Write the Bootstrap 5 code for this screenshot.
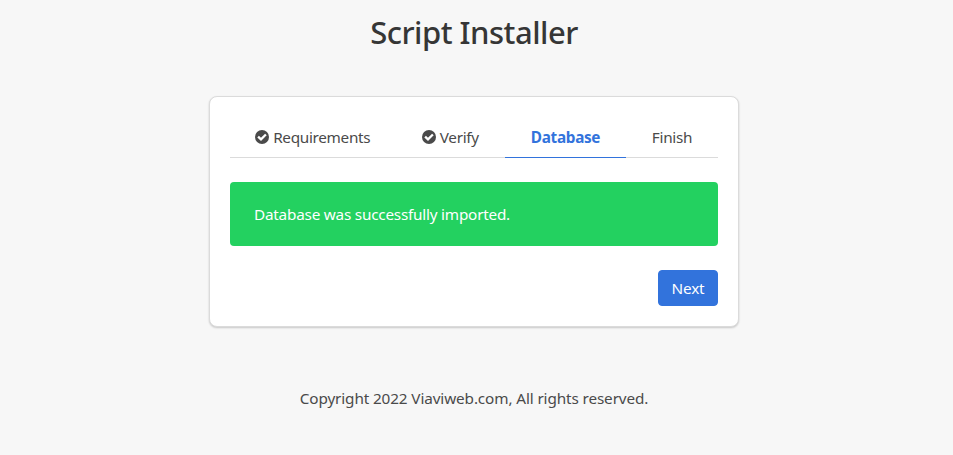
<!DOCTYPE html>
<html lang="en">
<head>
<meta charset="utf-8">
<meta name="viewport" content="width=device-width, initial-scale=1">
<title>Script Installer</title>
<link href="https://cdn.jsdelivr.net/npm/bootstrap@5.3.0/dist/css/bootstrap.min.css" rel="stylesheet">
<style>
body{background:#f7f7f7;color:#4a4a4a;font-family:"Segoe UI","Noto Sans","Open Sans",sans-serif;font-size:15.3px;line-height:24px;letter-spacing:-.22px;overflow:hidden}
.installer{width:530px;margin-left:209px}
.page-title{color:#363636;font-size:31px;line-height:36px;font-weight:500;letter-spacing:-.5px;padding-top:14px;margin-bottom:46px}
.panel{border:1px solid #dbdbdb;border-radius:8px;box-shadow:0 1px 2px rgba(10,10,10,.2);padding:20px;height:231px}
.steps{display:grid;grid-template-columns:165.5px 109.5px 121px 92px;height:41px;letter-spacing:-.3px}
.steps .nav-link{color:#4a4a4a;border-bottom:1px solid #dbdbdb;border-radius:0;padding:8px 0;gap:4px}
.steps .nav-link.active{color:#3273dc;border-color:#3273dc;font-weight:700}
.steps svg{width:14px;height:14px}
.notice{background:#23d160;color:#fff;border:0;border-radius:4px;height:64px;padding:20px 24px}
.btn-next{background:#3273dc;border-color:#3273dc;color:#fff;width:60px;height:36px;padding:0;border-radius:4px;font-size:15.3px;letter-spacing:-.2px}
.btn-next:hover{background:#276cda;color:#fff}
footer{margin-top:59px;letter-spacing:-.12px}
</style>
</head>
<body>
<main class="installer">
  <h1 class="page-title text-center"><span>Script Installer</span></h1>
  <section class="panel bg-white">
    <nav class="nav steps">
      <a class="nav-link d-flex align-items-center justify-content-center" href="#"><svg viewBox="0 0 14 14" aria-hidden="true"><circle cx="7" cy="7" r="7" fill="#4a4a4a"/><path d="m3.1 6.6 2.9 2.8 4.9-4.9" fill="none" stroke="#fff" stroke-width="2.3"/></svg><span>Requirements</span></a>
      <a class="nav-link d-flex align-items-center justify-content-center" href="#"><svg viewBox="0 0 14 14" aria-hidden="true"><circle cx="7" cy="7" r="7" fill="#4a4a4a"/><path d="m3.1 6.6 2.9 2.8 4.9-4.9" fill="none" stroke="#fff" stroke-width="2.3"/></svg><span>Verify</span></a>
      <a class="nav-link active d-flex align-items-center justify-content-center" href="#"><span>Database</span></a>
      <a class="nav-link d-flex align-items-center justify-content-center" href="#"><span>Finish</span></a>
    </nav>
    <div class="alert notice mt-4 mb-4" role="alert"><span>Database was successfully imported.</span></div>
    <div class="d-flex justify-content-end"><button class="btn btn-next" type="button">Next</button></div>
  </section>
  <footer class="text-center"><span>Copyright 2022 Viaviweb.com, All rights reserved.</span></footer>
</main>
<script src="https://cdn.jsdelivr.net/npm/bootstrap@5.3.0/dist/js/bootstrap.bundle.min.js"></script>
</body>
</html>
